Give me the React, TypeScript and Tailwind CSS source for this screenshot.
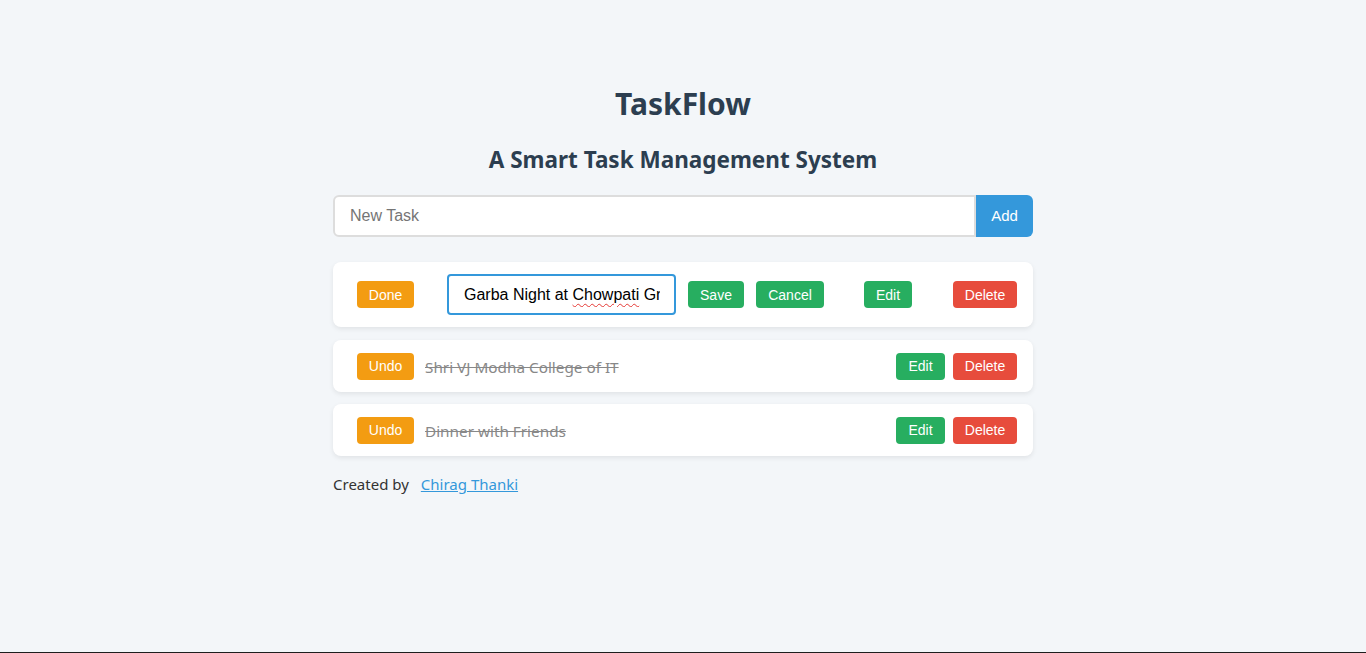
import React from "react";

const seg = { fontFamily: '"Noto Sans", "Open Sans", sans-serif' };
const arial = { fontFamily: '"Liberation Sans", Arial, sans-serif' };

function Btn({ label, color, w, className = "" }: { label: string; color: string; w: string; className?: string }) {
  return (
    <button
      style={arial}
      className={`h-[27px] ${w} ${color} rounded-[4px] text-white text-[14px] leading-none flex items-center justify-center shrink-0 ${className}`}
    >
      {label}
    </button>
  );
}

function DoneTask({ text }: { text: string }) {
  return (
    <div className="bg-white rounded-[8px] shadow-[0_2px_5px_rgba(0,0,0,0.08)] h-[52px] flex items-center pl-[24px] pr-[16px]">
      <Btn label="Undo" color="bg-[#f39c12]" w="w-[57px]" />
      <span style={seg} className="ml-[11px] mt-[3px] text-[15.3px] text-[#888888] line-through flex-1">
        {text}
      </span>
      <Btn label="Edit" color="bg-[#27ae60]" w="w-[49px]" />
      <Btn label="Delete" color="bg-[#e74c3c]" w="w-[64px]" className="ml-[8px]" />
    </div>
  );
}

export default function App() {
  return (
    <div className="min-h-[653px] h-[653px] bg-[#f3f6f9] border-b border-[#1e1e1e] flex justify-center">
      <div className="w-[700px] pt-[84px] flex flex-col">
        <h1 style={seg} className="text-center text-[30px] leading-[40px] font-bold text-[#2c3e50]">
          TaskFlow
        </h1>
        <h2 style={seg} className="mt-[20px] text-center text-[22.5px] leading-[32px] font-bold text-[#2c3e50]">
          A Smart Task Management System
        </h2>
        <div className="mt-[19px] flex h-[42px]">
          <input
            style={arial}
            placeholder="New Task"
            className="flex-1 h-full border-2 border-[#dddddd] rounded-l-[6px] pl-[15px] text-[16px] text-black placeholder:text-[#757575] bg-white outline-none"
          />
          <button style={arial} className="w-[57px] h-full bg-[#3498db] rounded-r-[6px] text-white text-[15px]">
            Add
          </button>
        </div>

        <div className="mt-[25px] flex flex-col gap-[13px]">
          <div className="bg-white rounded-[8px] shadow-[0_2px_5px_rgba(0,0,0,0.08)] h-[65px] flex items-center pl-[24px] pr-[16px]">
            <Btn label="Done" color="bg-[#f39c12]" w="w-[57px]" />
            <div className="ml-[33px] w-[229px] h-[41px] border-2 border-[#3498db] rounded-[4px] pl-[15px] pr-[14px] flex items-center bg-white">
              <div style={arial} className="w-full overflow-hidden whitespace-nowrap text-[16px] text-black">
                Garba Night at{" "}
                <span className="underline decoration-wavy decoration-[#e53935] decoration-1 underline-offset-[3px]">
                  Chowpati
                </span>{" "}
                Gr
              </div>
            </div>
            <Btn label="Save" color="bg-[#27ae60]" w="w-[56px]" className="ml-[12px]" />
            <Btn label="Cancel" color="bg-[#27ae60]" w="w-[68px]" className="ml-[12px]" />
            <Btn label="Edit" color="bg-[#27ae60]" w="w-[48px]" className="ml-[40px]" />
            <Btn label="Delete" color="bg-[#e74c3c]" w="w-[64px]" className="ml-[41px]" />
          </div>
          <DoneTask text="Shri VJ Modha College of IT" />
          <div className="-mt-[1px]">
            <DoneTask text="Dinner with Friends" />
          </div>
        </div>

        <p style={seg} className="mt-[16px] text-[15px] leading-[24px] text-[#333333]">
          Created by
          <a href="#" className="ml-[12px] text-[#3498db] underline">
            Chirag Thanki
          </a>
        </p>
      </div>
    </div>
  );
}
